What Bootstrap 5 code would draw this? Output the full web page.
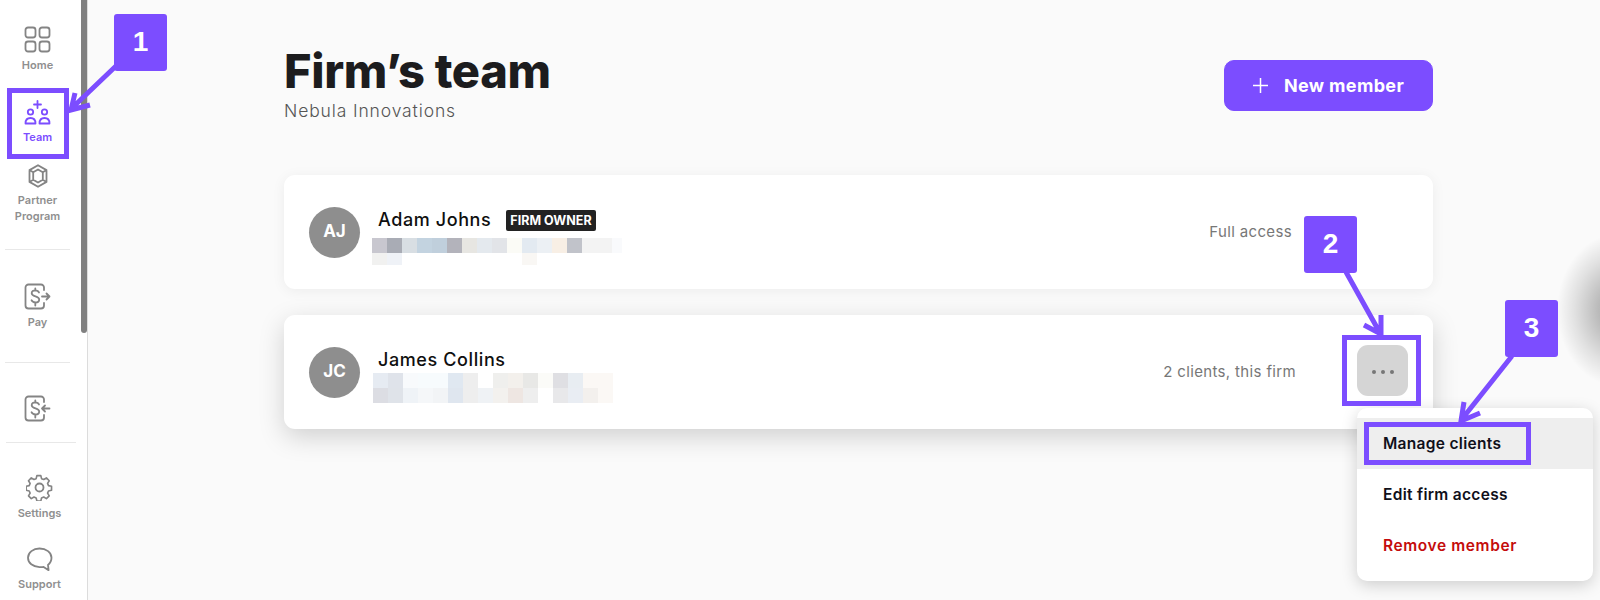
<!DOCTYPE html>
<html lang="en">
<head>
    <meta charset="UTF-8">
    <meta name="viewport" content="width=device-width, initial-scale=1.0">
    <title>Firm's team</title>
    <link rel="stylesheet" href="https://cdn.jsdelivr.net/npm/bootstrap@5.3.0/dist/css/bootstrap.min.css">
    <script src="https://cdn.jsdelivr.net/npm/bootstrap@5.3.0/dist/js/bootstrap.bundle.min.js"></script>
    <style>
        body {
            width: 1600px;
            height: 600px;
            overflow: hidden;
            position: relative;
            background: #fafafa;
            font-family: Inter, "Noto Sans", sans-serif;
            color: #1c1c1e;
        }

        /* Sidebar */
        .side-rail {
            width: 88px;
            height: 600px;
            background: #fff;
            border-right: 1px solid #dcdcdc;
        }
        .side-nav {
            width: 81px;
        }
        .side-thumb {
            width: 6px;
            height: 333px;
            background: #808080;
            border-radius: 0 0 3px 3px;
        }
        .side-link {
            color: #8f8f8f;
            font-size: 11px;
            font-weight: 600;
            line-height: 16px;
            text-align: center;
            width: 75px;
        }
        .side-link svg {
            display: block;
            margin: 0 auto;
            fill: none;
            stroke: #848484;
            stroke-width: 1.8;
            stroke-linecap: round;
            stroke-linejoin: round;
        }
        .side-link.is-active { color: #7c4dff; }
        .side-link.is-active svg { stroke: #7c4dff; }
        .side-rule {
            height: 1px;
            width: 65px;
            margin-left: 5px;
            background: #e8e8e8;
        }
        .side-rule-wide { width: 70px; margin-left: 6px; }
        .side-shift { width: 81px; padding-left: 2px; }
        .link-home { padding-top: 26px; height: 88px; }
        .link-team { padding-top: 12px; height: 75px; }
        .link-partner { padding-top: 1px; height: 86px; }
        .link-pay { padding-top: 33px; height: 112px; }
        .link-get { padding-top: 32px; height: 79px; }
        .link-settings { padding-top: 31px; height: 72px; }
        .link-support { padding-top: 32px; }

        /* Content */
        .team-pane {
            width: 1149px;
            margin-left: 196px;
        }
        .team-head { height: 175px; padding-top: 42px; }
        .team-title {
            font-size: 47px;
            font-weight: 800;
            line-height: 57px;
            letter-spacing: -.3px;
            margin: 0;
            color: #1c1c1e;
        }
        .team-firm {
            font-size: 17.5px;
            font-weight: 300;
            line-height: 24px;
            color: #555;
            letter-spacing: .87px;
        }
        .add-btn {
            width: 209px;
            height: 51px;
            margin-top: 18px;
            font-size: 18px;
            font-weight: 700;
            letter-spacing: .35px;
            border-radius: 10px;
            background: #7c4dff;
            border-color: #7c4dff;
        }
        .member-card {
            height: 114px;
            border: 0;
            border-radius: 11px;
            box-shadow: 0 2px 14px rgba(0, 0, 0, .06);
            padding-left: 25px;
        }
        .member-card.is-raised {
            margin-top: 26px;
            box-shadow: 0 8px 26px rgba(0, 0, 0, .17);
        }
        .member-pic {
            width: 51px;
            height: 51px;
            background: #8e8e8e;
            color: #fff;
            font-size: 17px;
            font-weight: 700;
        }
        .member-info { margin-left: 12px; padding-top: 33px; }
        .member-row { height: 24px; }
        .member-name {
            font-size: 18px;
            font-weight: 500;
            line-height: 22px;
            letter-spacing: .6px;
            color: #0f0f0f;
            margin-left: 6px;
        }
        .owner-tag {
            background: #222;
            color: #fff;
            font-size: 12.5px;
            font-weight: 700;
            line-height: 15px;
            padding: 3px 4px;
            border-radius: 2px;
            margin-left: 15px;
        }
        .blur-strip { display: block; }
        .blur-low { margin-top: 6px; }
        .blur-high { margin-top: 1px; margin-left: 1px; }
        .member-access {
            font-size: 15px;
            color: #777;
            line-height: 20px;
            margin-left: auto;
            letter-spacing: .35px;
        }
        .access-full { margin-right: 141px; }
        .access-some { margin-right: 137px; margin-top: -1px; }
        .dots-btn {
            position: absolute;
            left: 1073px;
            top: 30px;
            width: 51px;
            height: 51px;
            padding: 0;
            border: 0;
            background: #d5d5d5;
            border-radius: 11px;
        }
        .dots-btn i {
            display: inline-block;
            width: 4px;
            height: 4px;
            margin: 0 2.5px;
            border-radius: 50%;
            background: #777;
            vertical-align: middle;
        }

        /* Open menu */
        .member-menu {
            position: absolute;
            display: block;
            left: 1357px;
            top: 408px;
            width: 236px;
            height: 173px;
            padding: 10px 0 0;
            border: 0;
            border-radius: 10px;
            box-shadow: 0 4px 16px rgba(0, 0, 0, .18);
        }
        .member-menu .dropdown-item {
            height: 51px;
            line-height: 51px;
            padding: 0 0 0 26px;
            font-size: 15.5px;
            font-weight: 600;
            letter-spacing: .3px;
            color: #10101a;
        }
        .member-menu .dropdown-item.is-hover { background: #eee; }
        .member-menu .dropdown-item.is-danger { color: #c40c0c; letter-spacing: .6px; }

        /* Tutorial marks drawn on top of the screenshot */
        .step-tag {
            position: absolute;
            z-index: 1100;
            width: 53px;
            height: 57px;
            background: #7c4dff;
            border-radius: 3px;
            color: #fff;
            font-family: "Liberation Sans", sans-serif;
            font-size: 28px;
            font-weight: 700;
            line-height: 55px;
            text-align: center;
        }
        .tag-one { left: 114px; top: 14px; }
        .tag-two { left: 1304px; top: 216px; }
        .tag-three { left: 1505px; top: 300px; }
        .step-box {
            position: absolute;
            z-index: 1100;
            border: 5px solid #7c4dff;
        }
        .box-team { left: 7px; top: 88px; width: 62px; height: 71px; }
        .box-dots { left: 1342px; top: 335px; width: 79px; height: 71px; }
        .box-manage { left: 1364px; top: 422px; width: 167px; height: 43px; }
        .step-arrows {
            position: absolute;
            z-index: 1100;
            left: 0;
            top: 0;
            fill: none;
            stroke: #7c4dff;
            stroke-width: 5;
            stroke-linejoin: miter;
            pointer-events: none;
        }
        .edge-blob {
            position: absolute;
            left: 1555px;
            top: 235px;
            width: 45px;
            height: 150px;
            background: radial-gradient(ellipse 60px 76px at 62px 75px, rgba(0, 0, 0, .26) 30%, rgba(0, 0, 0, .1) 70%, rgba(0, 0, 0, 0) 100%);
        }
    </style>
</head>
<body>
    <div class="d-flex">
        <!-- Sidebar -->
        <aside class="side-rail d-flex flex-shrink-0">
            <nav class="side-nav flex-shrink-0">
                <a class="side-link link-home d-block text-decoration-none">
                    <svg width="27" height="27" viewBox="0 0 27 27"><rect x="1.500" y="1.500" width="10" height="10" rx="2.500"/><rect x="15.500" y="1.500" width="10" height="10" rx="2.500"/><rect x="1.500" y="15.500" width="10" height="10" rx="2.500"/><rect x="15.500" y="15.500" width="10" height="10" rx="2.500"/></svg>
                    <div class="mt-1">Home</div>
                </a>
                <a class="side-link is-active link-team d-block text-decoration-none">
                    <svg width="27" height="25" viewBox="0 0 27 25"><path d="M13.500 1v7M10 4.500h7"/><circle cx="6.500" cy="12" r="2.700"/><circle cx="20.500" cy="12" r="2.700"/><path d="M1.500 23.500c0-3.600 2-5.500 5-5.500s5 1.900 5 5.500zM15.500 23.500c0-3.600 2-5.500 5-5.500s5 1.900 5 5.500z"/></svg>
                    <div class="mt-1">Team</div>
                </a>
                <a class="side-link link-partner d-block text-decoration-none">
                    <svg width="20" height="24" viewBox="0 0 20 24"><path d="M10 1.200l8.500 4.900v11.800L10 22.800l-8.500-4.900V6.100zM10 5.500l4.800 2.800v7.400L10 18.500l-4.800-2.800V8.300zM1.500 6.100l3.700 2.200M18.500 6.100l-3.700 2.200M1.500 17.900l3.700-2.200M18.500 17.900l-3.700-2.200"/></svg>
                    <div class="mt-1">Partner<br>Program</div>
                </a>
                <div class="side-rule"></div>
                <a class="side-link link-pay d-block text-decoration-none">
                    <svg width="27" height="27" viewBox="0 0 27 27"><path d="M20 7V4.500a3 3 0 0 0-3-3H4.500a3 3 0 0 0-3 3v18a3 3 0 0 0 3 3H17a3 3 0 0 0 3-3V20"/><path d="M15 9.500c-.6-1.500-2-2.200-3.700-2.200-2 0-3.600 1-3.600 2.900 0 4 7.500 2.400 7.500 6.300 0 1.900-1.700 3-3.800 3-1.800 0-3.200-.8-3.900-2.300M11.300 5.500v2M11.300 20.500v2M18 13.500h7.500M22.500 10.500l3 3-3 3"/></svg>
                    <div class="mt-1">Pay</div>
                </a>
                <div class="side-rule"></div>
                <a class="side-link link-get d-block text-decoration-none">
                    <svg width="27" height="27" viewBox="0 0 27 27"><path d="M20 7V4.500a3 3 0 0 0-3-3H4.500a3 3 0 0 0-3 3v18a3 3 0 0 0 3 3H17a3 3 0 0 0 3-3V20"/><path d="M15 9.500c-.6-1.500-2-2.200-3.700-2.200-2 0-3.600 1-3.600 2.900 0 4 7.500 2.400 7.500 6.300 0 1.900-1.700 3-3.800 3-1.800 0-3.200-.8-3.900-2.300M11.300 5.500v2M11.300 20.500v2M25.500 13.500H18M21 10.500l-3 3 3 3"/></svg>
                </a>
                <div class="side-rule side-rule-wide"></div>
                <div class="side-shift">
                    <a class="side-link link-settings d-block text-decoration-none">
                        <svg width="27" height="27" viewBox="0 0 27 27"><circle cx="13.500" cy="13.500" r="4"/><path d="M11.300 1h4.400l.8 3.400 2.400 1 3-1.800 3.100 3.100-1.800 3 1 2.400 3.400.8v4.400l-3.400.8-1 2.400 1.800 3-3.100 3.100-3-1.800-2.400 1-.8 3.400h-4.400l-.8-3.400-2.400-1-3 1.800-3.100-3.100 1.800-3-1-2.400-3.400-.8v-4.400l3.400-.8 1-2.400-1.800-3 3.100-3.100 3 1.800 2.400-1z" transform="translate(.7 .7) scale(.9)"/></svg>
                        <div class="mt-1">Settings</div>
                    </a>
                    <a class="side-link link-support d-block text-decoration-none">
                        <svg width="27" height="25" viewBox="0 0 27 25"><path d="M13.500 1.500c6.700 0 12 3.900 12 9.300 0 3.300-1.700 5.700-3.500 7.200l.6 5.200-5-3.300c-1.300.3-2.800.3-4.100.2-6.700-.3-11.500-4.100-11.500-9.300 0-5.400 5.300-9.300 11.500-9.300z"/></svg>
                        <div class="mt-1">Support</div>
                    </a>
                </div>
            </nav>
            <div class="side-thumb flex-shrink-0"></div>
        </aside>

        <!-- Team list -->
        <main class="team-pane">
            <div class="team-head d-flex justify-content-between align-items-start">
                <div>
                    <h1 class="team-title">Firm’s team</h1>
                    <div class="team-firm">Nebula Innovations</div>
                </div>
                <button class="btn btn-primary add-btn d-flex align-items-center justify-content-center gap-3" type="button">
                    <svg width="15" height="15" viewBox="0 0 15 15" fill="none" stroke="#fff" stroke-width="1.500"><path d="M7.500 0v15M0 7.500h15"/></svg>
                    <span>New member</span>
                </button>
            </div>

            <div class="card member-card flex-row align-items-center">
                <div class="member-pic rounded-circle d-flex align-items-center justify-content-center flex-shrink-0">AJ</div>
                <div class="member-info align-self-start">
                    <div class="member-row d-flex align-items-center">
                        <span class="member-name">Adam Johns</span>
                        <span class="owner-tag">FIRM OWNER</span>
                    </div>
                    <svg class="blur-strip blur-low" width="250" height="27" id="blur-adam"></svg>
                </div>
                <div class="member-access access-full">Full access</div>
            </div>

            <div class="card member-card is-raised flex-row align-items-center">
                <div class="member-pic rounded-circle d-flex align-items-center justify-content-center flex-shrink-0">JC</div>
                <div class="member-info align-self-start">
                    <div class="member-row d-flex align-items-center">
                        <span class="member-name">James Collins</span>
                    </div>
                    <svg class="blur-strip blur-high" width="250" height="30" id="blur-james"></svg>
                </div>
                <div class="member-access access-some">2 clients, this firm</div>
                <button class="btn dots-btn" type="button"><i></i><i></i><i></i></button>
            </div>
        </main>
    </div>

    <div class="dropdown-menu member-menu">
        <a class="dropdown-item is-hover" href="#">Manage clients</a>
        <a class="dropdown-item" href="#">Edit firm access</a>
        <a class="dropdown-item is-danger" href="#">Remove member</a>
    </div>

    <div class="edge-blob"></div>

    <div class="step-box box-team"></div>
    <div class="step-box box-dots"></div>
    <div class="step-box box-manage"></div>
    <svg class="step-arrows" width="1600" height="600" viewBox="0 0 1600 600">
        <path d="M116 66L72 108M75 93L71 110L90 105"/>
        <path d="M1346 272L1380 333M1364 325L1381 334L1381 315"/>
        <path d="M1512 356L1462 419M1464 402L1461 421L1480 413"/>
    </svg>
    <div class="step-tag tag-one">1</div>
    <div class="step-tag tag-two">2</div>
    <div class="step-tag tag-three">3</div>

    <script>
        // pixelated e-mail rows, one cell is 15px wide
        const blurAdam = [
            ['c8c7cf','a9acb5','d8dee3','c3d3e0','c0cfdc','b3b3bb','e7e6e2','e4e9ee','e2e4e8','fbfbf6','e3eaf1','ecf0f4','f8efe5','c1c3ca','f3f3f3','f3f3f3','f9fafc'],
            ['f1f1f0','eff2f7','','','','','','','','','f9f7f4']
        ];
        const blurJames = [
            ['e6ebf2','dfe3ea','f8fafc','f7fbfd','f7fbfd','e0e8f1','eeeeee','','efefed','f3f0ec','e8e8e6','fbfbf8','dfdfe3','e8edf2','fbf8f5','fbf8f5'],
            ['dcdde3','dfe3e9','eff3f7','f5f7f9','f2f4f6','dfe6ef','eeeeee','eff2f5','f3f1ee','eee6e2','eeeeee','','e8e8ea','e9edf3','f3f0ed','fbf8f5']
        ];

        function drawBlur(id, rows, heights) {
            const svg = document.getElementById(id);
            let y = 0;
            rows.forEach((row, r) => {
                row.forEach((color, i) => {
                    if (!color) return;
                    const cell = document.createElementNS('http://www.w3.org/2000/svg', 'rect');
                    cell.setAttribute('x', i * 15);
                    cell.setAttribute('y', y);
                    cell.setAttribute('width', 15);
                    cell.setAttribute('height', heights[r]);
                    cell.setAttribute('fill', '#' + color);
                    svg.appendChild(cell);
                });
                y += heights[r];
            });
        }
        drawBlur('blur-adam', blurAdam, [15, 12]);
        drawBlur('blur-james', blurJames, [15, 15]);
    </script>
</body>
</html>
